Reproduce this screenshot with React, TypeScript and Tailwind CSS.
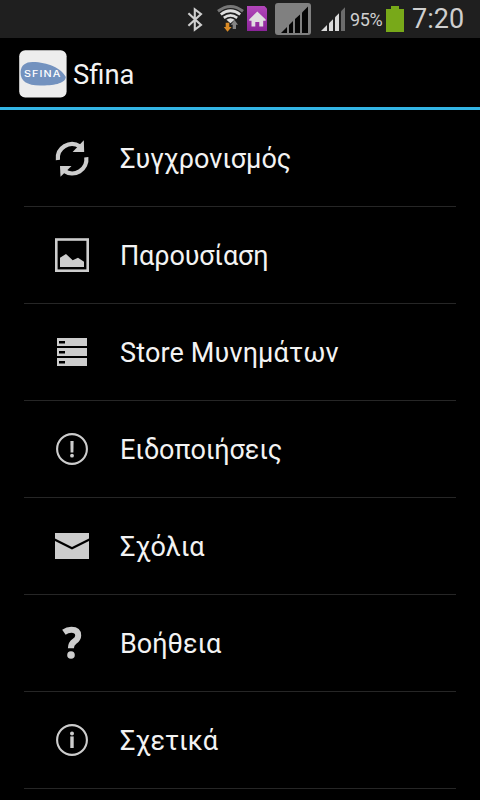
import type { ReactNode } from "react";

const ICON = "#cdcdcd";

function BluetoothIcon() {
  return (
    <svg className="ml-[187px] shrink-0" width="16" height="38" viewBox="187 0 16 38" fill="none" stroke="#cfcfcf" strokeWidth="2.1">
      <path d="M188.4 13.2 L201 25 L194.8 29.6 V9.4 L201 14 L188.4 25.8" />
    </svg>
  );
}

function WifiIcon() {
  return (
    <svg className="ml-[13px] shrink-0" width="28" height="38" viewBox="216 0 28 38" fill="none">
      <path d="M218 11.3 Q230.5 1.7 243 11.3" stroke="#777" strokeWidth="3" />
      <path d="M220.8 14.5 Q230.5 7 240.2 14.5" stroke="#dedede" strokeWidth="2.8" />
      <path d="M223.8 17.9 Q230.5 13 237.2 17.9" stroke="#dedede" strokeWidth="2.6" />
      <path d="M226.4 19.8 Q230.5 16.8 234.6 19.8 L230.5 23.2Z" fill="#dedede" />
      <path d="M225.7 22.7 H229.3 V27 H231.6 L227.5 31.8 L223.8 27 H225.7Z" fill="#d98a25" />
      <path d="M232.7 29 V24.7 H230.8 L234.5 20 L238 24.7 H236 V29Z" fill="#858585" />
    </svg>
  );
}

function HomeBadge() {
  return (
    <svg className="ml-[3px] shrink-0" width="20" height="38" viewBox="247 0 20 38">
      <defs>
        <linearGradient id="violet" x1="0" y1="0" x2="0" y2="1">
          <stop offset="0" stopColor="#b246ba" />
          <stop offset="1" stopColor="#8b2499" />
        </linearGradient>
      </defs>
      <path d="M247 6 H264.5 L267 8.5 V31 H247Z" fill="url(#violet)" />
      <path d="M257.3 11.5 L249.2 19.4 V20.7 H251.5 V26.5 H255.3 V22 H259.3 V26.5 H263.2 V20.7 H265.7 V19.4Z" fill="#e0dce0" />
    </svg>
  );
}

function SimSignal() {
  return (
    <svg className="ml-[8px] shrink-0" width="36" height="38" viewBox="275 0 36 38">
      <rect x="275" y="3" width="36" height="32" rx="3" fill="#808080" />
      <g fill="#050505">
        <path d="M281 33 L287 27 V33Z" />
        <path d="M289 33 V25 L293 21 V33Z" />
        <path d="M295 33 V19 L300 14.5 V33Z" />
        <path d="M302 33 V12.5 L308 6.5 V33Z" />
      </g>
    </svg>
  );
}

function SignalIcon() {
  return (
    <svg className="ml-[10px] shrink-0" width="24" height="38" viewBox="321 0 24 38" fill="#dadada">
      <path d="M321 31 L327 25 V31Z" />
      <path d="M329 31 V23.3 L333 19.3 V31Z" />
      <path d="M335 31 V17.3 L339 13.3 V31Z" />
      <path d="M341 31 V11.3 L345 7.3 V31Z" fill="#6c6c6c" />
    </svg>
  );
}

function Battery() {
  return (
    <svg className="ml-[3px] shrink-0" width="18" height="38" viewBox="386 0 18 38" fill="#78a919">
      <path d="M386 9 H391 V6 H399 V9 H404 V32 H386Z" />
    </svg>
  );
}

function StatusBar() {
  return (
    <div className="flex h-[38px] shrink-0 items-center bg-[#1f1f1f] text-[#cfcfcf]">
      <BluetoothIcon />
      <WifiIcon />
      <HomeBadge />
      <SimSignal />
      <SignalIcon />
      <span className="ml-[5px] w-[33px] whitespace-nowrap pt-[2px] text-[18px] leading-none tracking-[-0.4px]">95%</span>
      <Battery />
      <span className="ml-[8px] whitespace-nowrap pt-px text-[27px] leading-none">7:20</span>
    </div>
  );
}

function AppLogo() {
  return (
    <svg className="ml-[19px] shrink-0" width="48" height="48" viewBox="0 0 48 48">
      <rect x="0.2" y="0.2" width="47.4" height="47.4" rx="6" fill="#ededed" />
      <path
        d="M1.6 22 C2 15 7 11.8 14 12 C28 12 43 18.5 46.8 27 C46 34 34 35.5 21 35.5 C8 35.5 1.3 31 1.6 22Z"
        fill="#7392bf"
      />
      <text
        transform="translate(5 26.6) scale(1.25 1)"
        fill="#fff"
        fontSize="8.6"
        fontWeight="500"
        letterSpacing="0.9"
        fontFamily="Inter, sans-serif"
      >
        SFINA
      </text>
    </svg>
  );
}

function Glyph({ children }: { children: ReactNode }) {
  return (
    <svg className="ml-6 shrink-0" width="48" height="48" viewBox="0 0 48 48" fill={ICON}>
      {children}
    </svg>
  );
}

const items: { label: string; spacing: string; icon: ReactNode }[] = [
  {
    label: "Συγχρονισμός",
    spacing: "tracking-normal",
    icon: (
      <>
        <path d="M9.9 26 A14.2 14.2 0 0 1 32 12.5" fill="none" stroke={ICON} strokeWidth="4.2" />
        <path d="M35.8 6.3 L36.2 18 H24.6Z" />
        <path d="M38.3 23.3 A14.2 14.2 0 0 1 16 36.8" fill="none" stroke={ICON} strokeWidth="4.2" />
        <path d="M12 32 H23.5 L12.5 42.8Z" />
      </>
    ),
  },
  {
    label: "Παρουσίαση",
    spacing: "tracking-[-0.15px]",
    icon: (
      <>
        <rect x="8.3" y="8.5" width="31.4" height="31.2" fill="none" stroke={ICON} strokeWidth="2.6" />
        <path d="M12 36 V26.7 L18 23 L24.7 29.3 L30 26.7 L36 30.7 V36Z" />
      </>
    ),
  },
  {
    label: "Store Μυνημάτων",
    spacing: "tracking-[0.15px]",
    icon: (
      <>
        <path d="M9 10 H39 V18 H9Z M9 20 H39 V28 H9Z M9 30 H39 V38 H9Z" />
        <path d="M11 13 H17 V15.5 H11Z M11 23 H17 V25.5 H11Z M11 33 H17 V35.5 H11Z" fill="#000" />
      </>
    ),
  },
  {
    label: "Ειδοποιήσεις",
    spacing: "tracking-[-0.1px]",
    icon: (
      <>
        <circle cx="24" cy="24" r="14.9" fill="none" stroke={ICON} strokeWidth="2.1" />
        <path d="M22.4 16 H25.6 L25.4 27.6 H22.6Z" />
        <circle cx="24" cy="30.7" r="1.9" />
      </>
    ),
  },
  {
    label: "Σχόλια",
    spacing: "tracking-normal",
    icon: (
      <>
        <rect x="7" y="11" width="34" height="26" />
        <path d="M6 17.3 L24 26.3 L42 17.3" fill="none" stroke="#000" strokeWidth="2.2" />
      </>
    ),
  },
  {
    label: "Βοήθεια",
    spacing: "tracking-normal",
    icon: (
      <>
        <path
          d="M15.9 13.2 Q19.3 10.8 23.4 10.8 Q30.2 10.8 30.2 16.6 Q30.2 19.8 26.6 22.3 Q22.9 24.8 22.9 29.3"
          fill="none"
          stroke={ICON}
          strokeWidth="6"
        />
        <circle cx="23" cy="36" r="3.8" />
      </>
    ),
  },
  {
    label: "Σχετικά",
    spacing: "tracking-normal",
    icon: (
      <>
        <circle cx="24" cy="24" r="14.9" fill="none" stroke={ICON} strokeWidth="2.1" />
        <circle cx="24" cy="17.4" r="2" />
        <rect x="22.3" y="20.4" width="3.4" height="11.6" />
      </>
    ),
  },
];

export default function App() {
  return (
    <div className="flex h-[800px] w-[480px] flex-col overflow-hidden bg-black font-['Roboto','Noto_Sans',sans-serif] text-[#f3f3f3]">
      <StatusBar />
      <header className="flex h-[72px] shrink-0 items-center border-b-[3px] border-[#33b5e5] pt-[2px]">
        <AppLogo />
        <h1 className="ml-[6px] pt-[5px] text-[27.4px] leading-none">Sfina</h1>
      </header>
      <ul className="mx-6">
        {items.map((item) => (
          <li key={item.label} className="flex h-[97px] items-center border-b border-[#262626]">
            <Glyph>{item.icon}</Glyph>
            <span className={`ml-6 whitespace-nowrap pt-[2px] text-[27px] leading-8 ${item.spacing}`}>{item.label}</span>
          </li>
        ))}
      </ul>
    </div>
  );
}
